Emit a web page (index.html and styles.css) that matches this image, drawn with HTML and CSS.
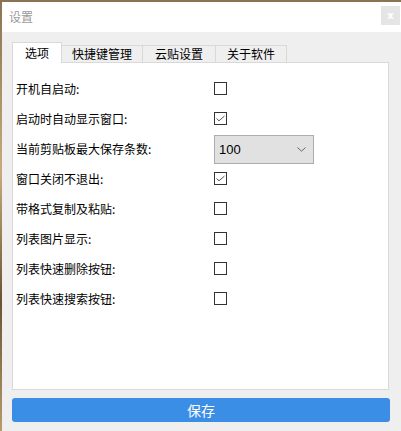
FILE: index.html
```html
<!DOCTYPE html>
<html lang="zh">
<head>
<meta charset="utf-8">
<title>设置</title>
<link rel="stylesheet" href="styles.css">
</head>
<body>
<div class="window">
  <div class="titlebar">
    <span class="title">设置</span>
    <span class="close">x</span>
  </div>
  <div class="content">
    <div class="tabs">
      <div class="tab active">选项</div>
      <div class="tab">快捷键管理</div>
      <div class="tab">云贴设置</div>
      <div class="tab">关于软件</div>
    </div>
    <div class="panel">
      <div class="row"><span class="label">开机自启动:</span><span class="cb"></span></div>
      <div class="row"><span class="label">启动时自动显示窗口:</span><span class="cb"><svg viewBox="0 0 13 13" width="13" height="13"><path d="M2.5 6.5 L5 8.8 L10.5 4" fill="none" stroke="#555" stroke-width="1"/></svg></span></div>
      <div class="row"><span class="label">当前剪贴板最大保存条数:</span>
        <div class="select"><span>100</span><svg viewBox="0 0 9 5" width="9" height="5"><path d="M0.5 0.5 L4.5 4.2 L8.5 0.5" fill="none" stroke="#666" stroke-width="1"/></svg></div>
      </div>
      <div class="row"><span class="label">窗口关闭不退出:</span><span class="cb"><svg viewBox="0 0 13 13" width="13" height="13"><path d="M2.5 6.5 L5 8.8 L10.5 4" fill="none" stroke="#555" stroke-width="1"/></svg></span></div>
      <div class="row"><span class="label">带格式复制及粘贴:</span><span class="cb"></span></div>
      <div class="row"><span class="label">列表图片显示:</span><span class="cb"></span></div>
      <div class="row"><span class="label">列表快速删除按钮:</span><span class="cb"></span></div>
      <div class="row"><span class="label">列表快速搜索按钮:</span><span class="cb"></span></div>
    </div>
    <div class="save">保存</div>
  </div>
</div>
</body>
</html>
```
FILE: styles.css
```css
html, body {
  margin: 0;
  padding: 0;
}
body {
  width: 401px;
  height: 431px;
  overflow: hidden;
  background: linear-gradient(180deg, #8a7352 0%, #c7ab7d 40%, #6b5233 70%, #b89b6e 100%);
  font-family: "Noto Sans CJK SC", "Microsoft YaHei", sans-serif;
  font-size: 12px;
  color: #000;
}
.window {
  margin: 2px 0 0 2px;
  width: 399px;
  height: 429px;
  background: #efefef;
  display: flex;
  flex-direction: column;
}
.titlebar {
  height: 30px;
  background: #fff;
  display: flex;
  align-items: center;
  justify-content: space-between;
  padding: 0 1px 0 7px;
}
.title {
  color: #9a9a9a;
  font-size: 12px;
  line-height: 1;
}
.close {
  width: 19px;
  height: 19px;
  background: #e5e5e5;
  color: #fff;
  font-family: "DejaVu Sans", sans-serif;
  font-size: 10px;
  font-weight: bold;
  display: flex;
  align-items: center;
  justify-content: center;
  margin-top: -3px;
}
.content {
  padding: 11px 12px 0 10px;
  display: flex;
  flex-direction: column;
}
.tabs {
  display: flex;
  align-items: flex-end;
  height: 19px;
}
.tab {
  height: 16px;
  line-height: 16px;
  padding: 0 10px;
  background: #efefef;
  border: 1px solid #d9d9d9;
  border-bottom: none;
  border-left: none;
  text-align: center;
}
.tab.active {
  height: 19px;
  line-height: 20px;
  padding: 0 12px;
  background: #fff;
  border-left: 1px solid #d9d9d9;
  position: relative;
  z-index: 1;
  margin-bottom: -1px;
  height: 20px;
}
.tab:nth-child(2) { padding: 0 10px; }
.tab:nth-child(3) { padding: 0 12px; }
.tab:nth-child(4) { padding: 0 11px; }
.panel {
  height: 326px;
  background: #fff;
  border: 1px solid #d9d9d9;
  padding: 11px 0 0 3px;
  box-sizing: border-box;
  height: 328px;
}
.row {
  height: 30px;
  display: flex;
  align-items: center;
}
.label {
  width: 198px;
  line-height: 1;
}
.cb {
  width: 11px;
  height: 11px;
  border: 1px solid #333;
  background: #fff;
  position: relative;
  display: block;
  margin-top: -2px;
}
.cb svg {
  display: block;
  margin: -1px 0 0 -1px;
}
.select {
  width: 98px;
  height: 27px;
  border: 1px solid #adadad;
  background: #e1e1e1;
  display: flex;
  align-items: center;
  justify-content: space-between;
  padding: 0 7px 0 4px;
  box-sizing: border-box;
  width: 100px;
  height: 29px;
  font-family: "Liberation Sans", sans-serif;
  font-size: 13px;
}
.select svg {
  display: block;
}
.save {
  margin-top: 8px;
  height: 24px;
  width: 378px;
  background: #3b8ee6;
  border-radius: 3px;
  color: #fff;
  font-size: 14px;
  line-height: 24px;
  text-align: center;
}
```
